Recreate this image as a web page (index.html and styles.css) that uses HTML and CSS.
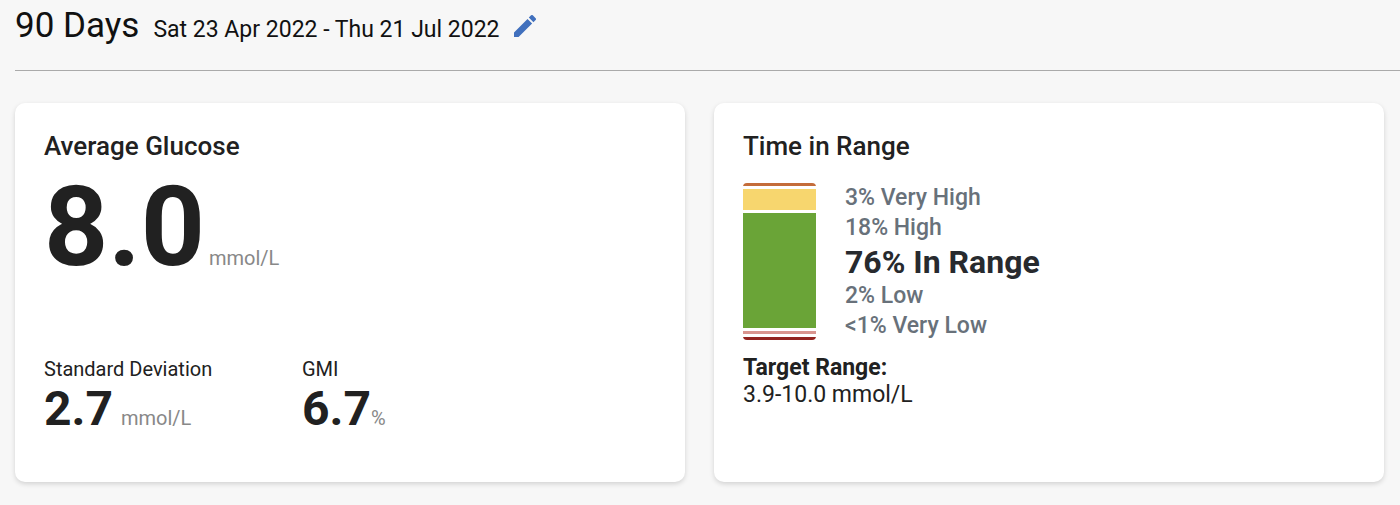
FILE: index.html
```
<!DOCTYPE html>
<html lang="en">
<head>
  <meta charset="UTF-8">
  <meta name="viewport" content="width=device-width, initial-scale=1.0">
  <title>Glucose Overview</title>
  <link rel="stylesheet" href="styles.css">
</head>
<body>
  <header class="header">
    <h1>90 Days</h1>
    <span class="dates">Sat 23 Apr 2022 - Thu 21 Jul 2022</span>
    <button type="button" class="edit-btn" aria-label="Edit dates">
      <svg viewBox="3 3 18 18" width="22" height="22" aria-hidden="true">
        <path fill="currentColor" d="M3 17.25V21h3.75L17.81 9.94l-3.75-3.75L3 17.25zM20.71 7.04a1 1 0 0 0 0-1.41l-2.34-2.34a1 1 0 0 0-1.41 0l-1.83 1.83 3.75 3.75 1.83-1.83z"/>
      </svg>
    </button>
  </header>

  <main class="cards">
    <section class="card">
      <h2>Average Glucose</h2>
      <div class="average">
        <span class="average-value">8.0</span>
        <span class="unit">mmol/L</span>
      </div>
      <div class="stats">
        <div class="stat">
          <div class="stat-label">Standard Deviation</div>
          <div class="stat-row">
            <span class="stat-value">2.7</span>
            <span class="unit">mmol/L</span>
          </div>
        </div>
        <div class="stat">
          <div class="stat-label">GMI</div>
          <div class="stat-row percent">
            <span class="stat-value">6.7</span>
            <span class="unit">%</span>
          </div>
        </div>
      </div>
    </section>

    <section class="card">
      <h2>Time in Range</h2>
      <div class="range">
        <div class="range-bar">
          <div class="very-high"></div>
          <div class="high"></div>
          <div class="in-range"></div>
          <div class="low"></div>
          <div class="very-low"></div>
        </div>
        <ul class="range-list">
          <li>3% Very High</li>
          <li>18% High</li>
          <li class="main">76% In Range</li>
          <li>2% Low</li>
          <li>&lt;1% Very Low</li>
        </ul>
      </div>
      <div class="target">
        <strong>Target Range:</strong>
        <div>3.9-10.0 mmol/L</div>
      </div>
    </section>
  </main>
</body>
</html>
```
FILE: styles.css
```
* {
  box-sizing: border-box;
}
body {
  margin: 0;
  padding-left: 15px;
  font-family: Roboto, sans-serif;
  background: #f7f7f7;
  color: #212121;
}
h1, h2, ul {
  margin: 0;
  padding: 0;
}

/* Header */
.header {
  display: flex;
  align-items: baseline;
  gap: 14px;
  height: 71px;
  padding-top: 5px;
  border-bottom: 1px solid #aaa;
  color: #111;
}
h1 {
  font-size: 35px;
  font-weight: 400;
  line-height: 42px;
}
.dates {
  font-size: 23px;
}
.edit-btn {
  display: flex;
  align-self: flex-start;
  margin-top: 10px;
  padding: 0;
  border: none;
  background: none;
  color: #4170bd;
  cursor: pointer;
}

/* Cards */
.cards {
  display: grid;
  grid-template-columns: 1fr 1fr;
  gap: 29px;
  padding: 32px 16px 23px 0;
}
.card {
  min-height: 379px;
  padding: 28px 29px;
  background: #fff;
  border-radius: 10px;
  box-shadow: 0 2px 5px rgba(0, 0, 0, 0.15);
}
h2 {
  font-size: 26px;
  font-weight: 500;
  line-height: 30px;
}
.unit {
  font-size: 20px;
  color: #888;
}
.average {
  display: flex;
  align-items: baseline;
  gap: 4px;
}
.average-value {
  font-size: 112px;
  font-weight: 700;
  line-height: 132px;
}
.stats {
  display: grid;
  grid-template-columns: 230px 1fr;
  gap: 28px;
  margin-top: 64px;
}
.stat-label {
  font-size: 20px;
  line-height: 24px;
}
.stat-row {
  display: flex;
  align-items: baseline;
  gap: 8px;
}
.stat-row.percent {
  gap: 0;
}
.stat-value {
  font-size: 48px;
  font-weight: 700;
  line-height: 56px;
}

/* Time in range */
.range {
  display: flex;
  gap: 29px;
  margin-top: 22px;
}
.range-bar {
  display: flex;
  flex-direction: column;
  gap: 3px;
  width: 73px;
  height: 157px;
  border-radius: 4px;
  overflow: hidden;
}
.very-high {
  height: 3px;
  background: #c46c3a;
}
.high {
  height: 21px;
  background: #f7d66e;
}
.in-range {
  flex: 1;
  background: #6aa437;
}
.low {
  height: 3px;
  background: #d9958f;
}
.very-low {
  height: 3px;
  background: #932420;
}
.range-list {
  list-style: none;
  font-size: 23px;
  font-weight: 500;
  line-height: 30px;
  color: #68717a;
}
.range-list .main {
  font-size: 32px;
  font-weight: 700;
  line-height: 38px;
  color: #272a2e;
}
.target {
  margin-top: 13px;
  font-size: 23px;
  line-height: 27px;
}
```
